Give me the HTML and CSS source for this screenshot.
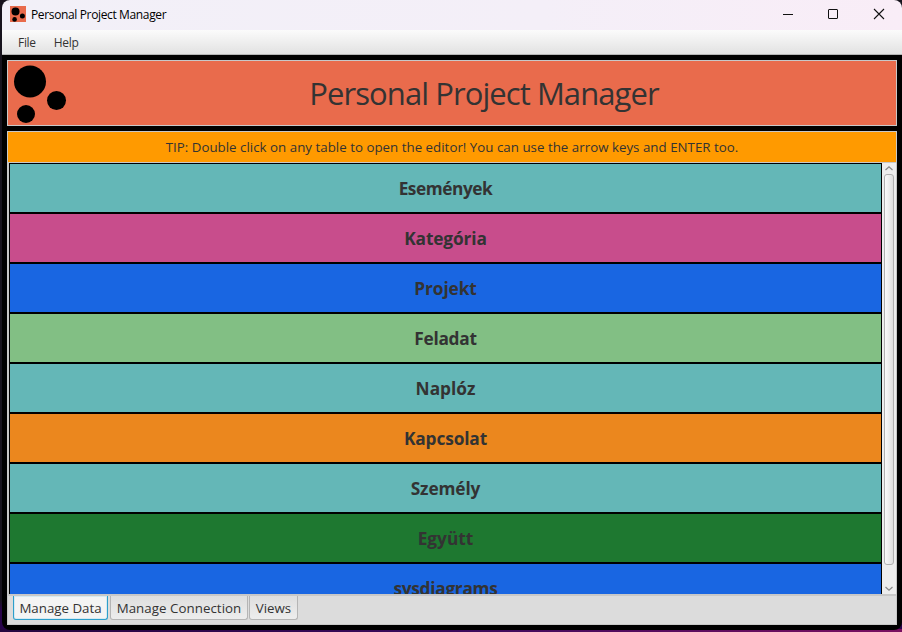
FILE: index.html
```html
<!DOCTYPE html>
<html lang="hu">
<head>
<meta charset="utf-8">
<title>Personal Project Manager</title>
<link rel="stylesheet" href="styles.css">
</head>
<body>
<div class="window">
  <header class="titlebar">
    <svg class="app-icon" viewBox="0 0 16 16"><rect width="16" height="16" fill="#e96b4c"/><circle cx="5.5" cy="5.4" r="4"/><circle cx="12.4" cy="10" r="2.5"/><circle cx="4.6" cy="13.4" r="2.3"/></svg>
    <span class="caption">Personal Project Manager</span>
    <svg class="controls" viewBox="0 0 102 12" fill="none" stroke="#111"><path d="M0 6.5H10"/><rect x="45.5" y="1.5" width="9" height="9" rx=".5"/><path d="M91 1L101 11M101 1L91 11" stroke-width="1.1"/></svg>
  </header>
  <nav class="menubar"><span>File</span><span>Help</span></nav>
  <main class="content">
    <section class="banner">
      <svg class="logo" viewBox="0 0 64 64"><circle cx="22" cy="20.5" r="16"/><circle cx="48.5" cy="39.5" r="9.5"/><circle cx="18" cy="53" r="9"/></svg>
      <h1>Personal Project Manager</h1>
    </section>
    <section class="panel">
      <p class="tip"><span>TIP: Double click on any table to open the editor! You can use the arrow keys and ENTER too.</span></p>
      <div class="tables">
        <div class="list">
          <div class="row teal"><span class="tightest">Események</span></div>
          <div class="row pink"><span class="snug">Kategória</span></div>
          <div class="row blue"><span class="snug">Projekt</span></div>
          <div class="row lime"><span class="tight">Feladat</span></div>
          <div class="row teal"><span>Naplóz</span></div>
          <div class="row orange"><span class="snug">Kapcsolat</span></div>
          <div class="row teal"><span class="snug">Személy</span></div>
          <div class="row green"><span>Együtt</span></div>
          <div class="row blue"><span class="tight">sysdiagrams</span></div>
        </div>
        <div class="scrollbar">
          <svg viewBox="0 0 14 11"><path d="M3.5 7L7 3.8L10.5 7"/></svg>
          <div class="thumb"></div>
          <svg viewBox="0 0 14 11"><path d="M3.5 4L7 7.2L10.5 4"/></svg>
        </div>
      </div>
      <div class="tabs">
        <span class="tab selected">Manage Data</span>
        <span class="tab connection">Manage Connection</span>
        <span class="tab views">Views</span>
      </div>
    </section>
  </main>
</div>
</body>
</html>
```
FILE: styles.css
```css
* { box-sizing: border-box; }
body {
  margin: 0;
  width: 902px;
  height: 632px;
  overflow: hidden;
  padding: 0 0 2px 2px;
  background: linear-gradient(90deg, #25063f, #3b0a5c 50%, #7a1060) bottom / 100% 3px no-repeat, linear-gradient(#17131d 0 600px, #28044a 610px);
  font-family: "Open Sans", "Noto Sans", sans-serif;
  color: #333;
}
span, h1 { white-space: nowrap; }
.window {
  width: 900px;
  height: 630px;
  background: #000;
  border-radius: 8px;
  overflow: hidden;
  display: flex;
  flex-direction: column;
}
.titlebar {
  height: 30px;
  display: flex;
  align-items: center;
  padding: 0 18px 2px 8px;
  background: linear-gradient(90deg, #f2f0f8, #f4eff8 60%, #f9edf7);
}
.app-icon { width: 16px; height: 16px; }
.caption { margin-left: 5px; font-size: 12px; color: #000; line-height: 16px; padding-top: 2px; letter-spacing: -0.36px; }
.controls { width: 102px; height: 12px; margin-left: auto; margin-right: -1px; }
.menubar {
  height: 25px;
  display: flex;
  padding: 4px 16px 0;
  gap: 18px;
  font-size: 12px;
  line-height: 17px;
  letter-spacing: -0.3px;
  background: linear-gradient(#fbfbfb, #e2e2e2);
  border-bottom: 1px solid #b5b5b5;
}
.content { flex: 1; display: flex; flex-direction: column; gap: 5px; padding: 5px; }
.banner {
  height: 66px;
  display: flex;
  background: #e96b4c;
  border: 1px solid #c8c8c8;
}
.logo { width: 64px; height: 64px; flex: none; }
h1 { margin: 0; flex: 1; text-align: center; font-size: 31px; font-weight: 400; line-height: 64px; letter-spacing: -0.93px; }
.panel { height: 494px; display: flex; flex-direction: column; border: 1px solid #c8c8c8; background: #dcdcdc; }
.tip { margin: 0; height: 31px; text-align: center; background: #ff9a00; border-bottom: 1px solid #c8c8c8; font-size: 13.3px; line-height: 31px; letter-spacing: 0.02px; }
.tables { height: 431px; display: flex; padding-left: 1px; background: #c8c8c8; overflow: hidden; }
.list { width: 873px; }
.row { height: 50px; border: 1px solid #000; text-align: center; font-size: 17.3px; font-weight: 700; line-height: 49px; }
.snug { letter-spacing: -0.12px; }
.tight { letter-spacing: -0.28px; }
.tightest { letter-spacing: -0.45px; }
.teal { background: #64b7b7; }
.pink { background: #c84d8c; }
.blue { background: #1966e2; }
.lime { background: #82bf84; }
.orange { background: #eb871e; }
.green { background: #1e7830; }
.scrollbar { width: 14px; display: flex; flex-direction: column; background: #ededed; }
.scrollbar svg { width: 14px; height: 11px; flex: none; fill: none; stroke: #888; stroke-width: 1.2; }
.thumb { flex: 1; margin: 0 2px 18px; border: 1px solid #b0b0b0; border-radius: 3px; background: linear-gradient(90deg, #fafafa, #dedede); }
.tabs { flex: 1; display: flex; gap: 2px; padding-left: 5px; border-top: 2px solid #c8c8c8; }
.tab { height: 24px; border: 1px solid #b5b5b5; border-top: 0; border-radius: 0 0 3px 3px; background: linear-gradient(#dedede, #ededed); font-size: 13.3px; line-height: 24px; text-align: center; }
.selected { width: 95px; border-color: #2d9fcb; background: #f4f4f4; box-shadow: inset 0 0 0 1px #d5eaf2; }
.connection { width: 138px; letter-spacing: 0.05px; }
.views { width: 49px; margin-left: -1px; }
```
